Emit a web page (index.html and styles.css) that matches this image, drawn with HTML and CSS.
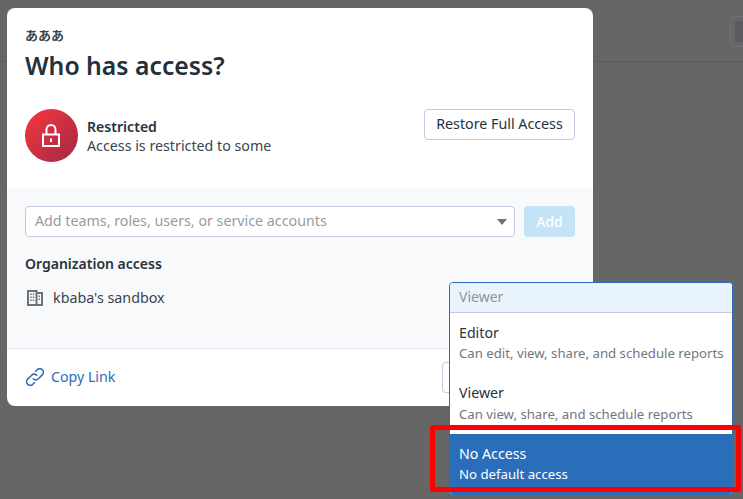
FILE: index.html
```html
<!DOCTYPE html>
<html lang="en">
<head>
<meta charset="utf-8">
<title>Who has access?</title>
<link rel="stylesheet" href="styles.css">
</head>
<body>
<div class="page">
  <div class="topbar"><span class="ghost-btn"></span></div>
  <section class="modal">
    <header class="head">
      <div class="kicker">あああ</div>
      <h1>Who has access?</h1>
      <div class="status">
        <span class="badge">
          <svg width="18" height="23" viewBox="0 0 18 23" fill="none" stroke="#fff" stroke-width="2">
            <rect x="1" y="10.500" width="16" height="11.500" />
            <path d="M4.500 10.500V5.500a4.500 4.500 0 0 1 9 0v5" />
            <path d="M9 14.500v3.500" />
          </svg>
        </span>
        <div class="status-text">
          <strong>Restricted</strong>
          <span>Access is restricted to some</span>
        </div>
        <button class="btn restore">Restore Full Access</button>
      </div>
    </header>
    <div class="body">
      <div class="add-row">
        <div class="combo"><span>Add teams, roles, users, or service accounts</span><i class="caret"></i></div>
        <button class="add">Add</button>
      </div>
      <h2>Organization access</h2>
      <div class="org">
        <svg width="16" height="16" viewBox="0 0 16 16" fill="#6c7278">
          <path fill-rule="evenodd" d="M0 0h10.500v2H16v14H0zM2 2v12h6.500V2zM10.500 4v10H14V4z"/>
          <path d="M3.200 3.500h1.500V5H3.200zM5.700 3.500h1.500V5H5.700zM3.200 6.500h1.500V8H3.200zM5.700 6.500h1.500V8H5.700zM3.200 9.500h1.500V11H3.200zM5.700 9.500h1.500V11H5.700zM11.500 5.500h1.500V7h-1.500zM11.500 8.500h1.500V10h-1.500z"/>
        </svg>
        <span>kbaba's sandbox</span>
      </div>
    </div>
    <footer class="foot">
      <a class="copy" href="#">
        <svg width="18" height="18" viewBox="1.500 1.500 15 15" fill="none" stroke="#2a6ebb" stroke-width="1.300" stroke-linecap="round">
          <path d="M7.500 10.500a3 3 0 0 0 4.300 0l3.300-3.300a3 3 0 0 0-4.300-4.300L9.500 4.200"/>
          <path d="M10.500 7.500a3 3 0 0 0-4.300 0l-3.300 3.300a3 3 0 0 0 4.300 4.300l1.300-1.300"/>
        </svg>
        <span>Copy Link</span>
      </a>
      <button class="btn done"></button>
    </footer>
  </section>
  <div class="menu">
    <div class="menu-head">Viewer</div>
    <div class="opt"><b>Editor</b><span>Can edit, view, share, and schedule reports</span></div>
    <div class="opt"><b>Viewer</b><span>Can view, share, and schedule reports</span></div>
    <div class="opt selected"><b>No Access</b><span>No default access</span></div>
  </div>
  <div class="highlight"></div>
</div>
</body>
</html>
```
FILE: styles.css
```css
* { box-sizing: border-box; }
html, body { margin: 0; height: 100%; }
body {
  background: #666;
  font-family: "Noto Sans", "Noto Sans CJK JP", sans-serif;
  color: #26323d;
  overflow: hidden;
}
.page { position: relative; width: 743px; height: 499px; overflow: hidden; }
.topbar {
  height: 62px;
  border-bottom: 1px solid #5a5c5f;
  padding: 16px 0 0 730px;
}
.ghost-btn {
  display: block;
  width: 30px;
  height: 31px;
  border: 1px solid #6f727c;
  border-radius: 4px;
  padding: 4px;
}
.ghost-btn::before {
  content: "";
  display: block;
  height: 100%;
  border-radius: 3px;
  background: #5b5c60;
}
.modal {
  position: absolute;
  left: 7px;
  top: 8px;
  width: 586px;
  height: 398px;
  background: #fff;
  border-radius: 8px;
  overflow: hidden;
  display: flex;
  flex-direction: column;
}
.head { height: 180px; padding: 18px 18px 0; }
.kicker { font-size: 13px; line-height: 19px; font-weight: 600; color: #3a444e; }
h1 { margin: 4px 0 0; font-size: 24.75px; line-height: 34px; font-weight: 600; color: #22303c; }
.status { display: flex; align-items: flex-start; margin-top: 26px; }
.badge {
  width: 53px;
  height: 53px;
  flex: none;
  border-radius: 50%;
  background: linear-gradient(135deg, #ec3440 15%, #a92a44 90%);
  display: flex;
  align-items: center;
  justify-content: center;
}
.badge svg { margin-right: 2px; }
.status-text { margin: 8px 0 0 9px; display: flex; flex-direction: column; flex: 1; font-size: 14.25px; line-height: 19px; color: #3a444e; }
.status-text strong { font-weight: 600; color: #26323d; font-size: 14.1px; }
.btn {
  background: #fff;
  border: 1px solid #c5c8e0;
  border-radius: 4px;
  font: inherit;
  color: #26323d;
}
.restore { width: 151px; height: 31px; font-size: 14.25px; padding: 0 0 2px; }
.body {
  height: 161px;
  background: #f8f9fb;
  padding: 18px 18px 0;
  border-bottom: 1px solid #e2e5ec;
  flex: none;
}
.add-row { display: flex; gap: 9px; }
.combo {
  flex: 1;
  height: 31px;
  background: #fff;
  border: 1px solid #c5c8e0;
  border-radius: 4px;
  padding: 0 7px 2px 9px;
  display: flex;
  align-items: center;
  justify-content: space-between;
  font-size: 14.25px;
  color: #969ba2;
}
.caret {
  width: 0;
  height: 0;
  border-left: 5px solid transparent;
  border-right: 5px solid transparent;
  border-top: 6px solid #6f747b;
  margin-top: 3px;
}
.add {
  width: 51px;
  height: 31px;
  padding: 0;
  border: 0;
  border-radius: 4px;
  background: #c5e3f6;
  color: #fff;
  font: inherit;
  font-size: 14px;
  font-weight: 500;
}
h2 { margin: 17px 0 0; font-size: 14px; line-height: 20px; font-weight: 600; color: #26323d; }
.org { display: flex; align-items: center; gap: 10px; margin-top: 14px; font-size: 14.3px; line-height: 20px; color: #3a444e; }
.org svg { margin-left: 2px; }
.foot { flex: 1; position: relative; padding: 18px 18px 0; }
.copy { display: flex; align-items: center; gap: 7px; font-size: 14.2px; line-height: 20px; color: #2a6ebb; text-decoration: none; }
.copy svg { flex: none; margin-left: 1px; }
.done { position: absolute; left: 435px; top: 13px; width: 60px; height: 31px; padding: 0; }
.menu {
  position: absolute;
  left: 449px;
  top: 282px;
  width: 284px;
  height: 213px;
  background: #fff;
  border: 1px solid #2a6ebb;
  border-radius: 4px;
  overflow: hidden;
}
.menu-head {
  height: 30px;
  padding-left: 9px;
  background: #e8f3fb;
  border-bottom: 1px solid #c5c8e0;
  font-size: 14px;
  line-height: 28px;
  color: #8f959c;
}
.opt { height: 60px; padding: 10px 0 0 9px; display: flex; flex-direction: column; white-space: nowrap; }
.opt b { font-weight: 400; font-size: 14.2px; line-height: 20px; color: #26323d; }
.opt span { font-size: 13.2px; line-height: 20px; color: #6f7680; }
.opt + .opt span { padding-top: 1px; }
.opt.selected { background: #2a6ebb; margin-top: 1px; height: 62px; }
.opt.selected span { padding-top: 0; }
.opt.selected b, .opt.selected span { color: #fff; }
.highlight {
  position: absolute;
  left: 430px;
  top: 425px;
  width: 311px;
  height: 67px;
  border: 5px solid #f00;
  border-radius: 3px;
}
```
